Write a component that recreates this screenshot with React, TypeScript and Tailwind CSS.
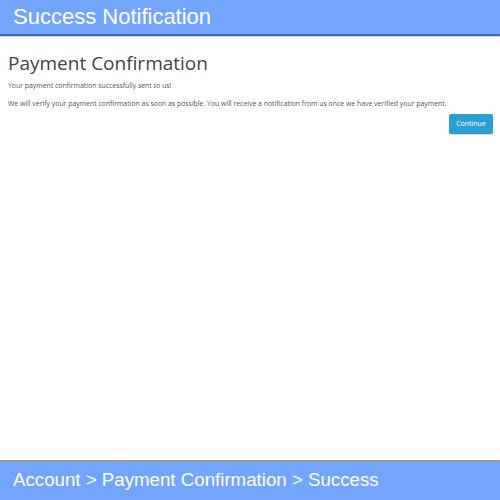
export default function App() {
  return (
    <div className="flex h-[500px] w-[500px] flex-col bg-white">
      <div className="h-[36px] shrink-0 border-b-2 border-[#4a6a9c] bg-[#74a5fe] pl-[13px] pt-[3px] font-['Liberation_Sans',Arial,sans-serif] text-[22px] leading-[28px] text-white">
        Success Notification
      </div>
      <div className="h-px shrink-0 bg-[#d8d8d8]" />
      <main className="flex-1 px-[8px] font-['Open_Sans',sans-serif] text-[#555]">
        <h1 className="mt-[13px] text-[19px] leading-[26px] text-[#444]">Payment Confirmation</h1>
        <p className="mt-[5px] text-[6.9px] leading-[10px]">Your payment confirmation successfully sent to us!</p>
        <p className="mt-[8px] text-[6.9px] leading-[10px]">
          We will verify your payment confirmation as soon as possible. You will receive a notification from us once we have verified your payment.
        </p>
        <div className="mt-[5px] flex justify-end">
          <button className="mr-[-1px] h-[20px] w-[44px] rounded-[2px] bg-[#2a9fd6] text-[7px] text-white shadow-[0_1px_0_rgba(0,0,0,0.15)]">
            Continue
          </button>
        </div>
      </main>
      <div className="h-[40px] shrink-0 border-t-2 border-[#9a9a9a] bg-[#74a5fe] pl-[13px] pt-[6px] font-['Liberation_Sans',Arial,sans-serif] text-[18.7px] leading-[24px] text-white">
        Account &gt; Payment Confirmation &gt; Success
      </div>
    </div>
  );
}
